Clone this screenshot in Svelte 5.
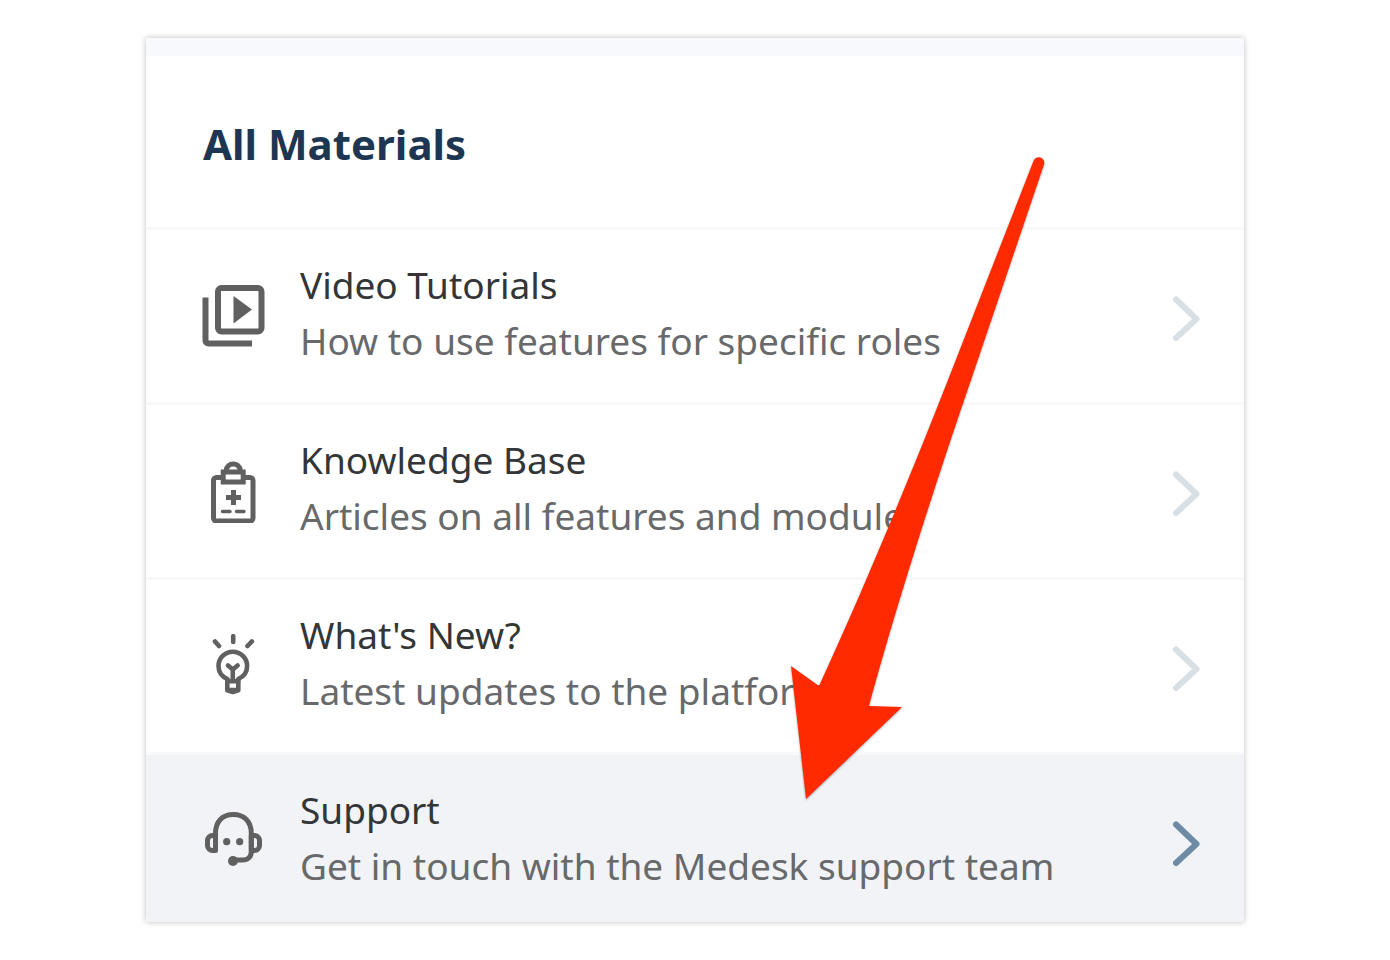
<script>
  const materials = [
    {
      id: "video",
      title: "Video Tutorials",
      description: "How to use features for specific roles",
    },
    {
      id: "knowledge",
      title: "Knowledge Base",
      description: "Articles on all features and modules",
    },
    {
      id: "news",
      title: "What's New?",
      description: "Latest updates to the platform",
    },
    {
      id: "support",
      title: "Support",
      description: "Get in touch with the Medesk support team",
    },
  ];

  let active = "support";
</script>

<main class="card">
  <header class="card-header">
    <h1>All Materials</h1>
  </header>

  <nav aria-label="All Materials">
    {#each materials as item (item.id)}
      <a
        class="row"
        class:active={active === item.id}
        href={`#${item.id}`}
        on:click={() => (active = item.id)}
      >
        <svg class="icon" viewBox="0 0 64 64" aria-hidden="true">
          {#if item.id === "video"}
            <rect x="17" y="4" width="43.5" height="43.5" rx="3.5" stroke-width="6" />
            <path d="M4.5 13.5V56.5a3 3 0 0 0 3 3H51" stroke-width="6" />
            <path class="solid" d="M32.5 12 51 25.5 32.5 39.5Z" />
          {:else if item.id === "knowledge"}
            <path d="M22 18.5H15.5a3 3 0 0 0-3 3V59a3 3 0 0 0 3 3H49a3 3 0 0 0 3-3V21.5a3 3 0 0 0-3-3H42" stroke-width="5" />
            <rect x="22.2" y="13" width="20" height="10" stroke-width="5" />
            <path d="M25 12C26 2.500 38.5 2.500 39.5 12" stroke-width="5" />
            <path d="M32.5 31v15M25 38.5h15" stroke-width="5" />
            <path d="M21.5 52.5h7.5M35.5 52.5h7.5" stroke-width="3.5" stroke-linecap="round" />
          {:else if item.id === "news"}
            <g stroke-width="4.6" stroke-linecap="round" stroke-linejoin="round">
              <path d="M32.2 2.2v5.8M14 7.5l4 4.5M50.8 7.5l-4.3 4.5" />
              <path d="M26.5 47.5V45C20.5 42.5 17.5 37.5 17.5 32a14.3 14.3 0 0 1 28.6 0C46.1 37.5 43 42.5 37.3 45v2.5" />
              <path d="M27 31.5l4.8 4 4.8-4M31.8 35.5V47" />
              <path d="M26.3 47.3h11v9l-5.5 1.7-5.5-1.7ZM26.3 56h11" />
            </g>
          {:else}
            <g stroke-width="5">
              <path d="M14.5 41V24.5C14.5 12 22 5.5 32.3 5.5S50.3 12 50.3 24.5V42.5C50.3 48 47 51 41.5 51H33" />
              <path d="M14.5 26.5H11.5a5 5 0 0 0-5 5V36.5a5 5 0 0 0 5 5H14.5Z" stroke-linejoin="round" />
              <path d="M50.3 26.5H53.5a5 5 0 0 1 5 5V36.5a5 5 0 0 1-5 5H50.3Z" stroke-linejoin="round" />
            </g>
            <circle class="solid" cx="32" cy="52" r="5" />
            <circle class="solid" cx="25.7" cy="32.7" r="3.6" />
            <circle class="solid" cx="38.7" cy="32.7" r="3.6" />
          {/if}
        </svg>

        <span class="text">
          <span class="title">{item.title}</span>
          <span class="description">{item.description}</span>
        </span>

        <svg class="chevron" viewBox="0 0 28 52" aria-hidden="true">
          <path d="M4 9.5 24.5 29 4 48" />
        </svg>
      </a>
    {/each}
  </nav>

  <!-- Pointer drawn over the list, aimed at the Support row -->
  <svg class="pointer" viewBox="0 0 260 650" aria-hidden="true">
    <path d="M243.5 11A5.5 5.5 0 0 1 254 14.5L181 230C142 343 103 467 79 556L112 557 16 649 1 516 29 536C75 436 122 322 158 230Z" />
  </svg>
</main>

<style>
  :global(body) {
    margin: 0;
    background: #fff;
  }

  .card {
    position: relative;
    margin: 38px 146px;
    background: #fff;
    box-shadow: 0 0 6px rgba(0, 0, 0, 0.25);
    font-family: "Noto Sans", sans-serif;
  }

  .card-header {
    padding: 63px 57px 58px;
    border-top: 18px solid #f8f9fc;
  }

  h1 {
    margin: 0;
    color: #1d3752;
    font-size: 42px;
    font-weight: 700;
    line-height: 50px;
  }

  .row {
    display: flex;
    align-items: center;
    gap: 35px;
    padding: 27px 44px 27px 55px;
    border-top: 3px solid #f8f9fa;
    text-decoration: none;
  }

  .row.active {
    padding-bottom: 22px;
    background: #f1f3f7;
  }

  .icon {
    flex: none;
    width: 64px;
    height: 64px;
    fill: none;
    stroke: #606060;
  }

  .solid {
    fill: #606060;
    stroke: none;
  }

  .text {
    display: flex;
    flex: 1;
    flex-direction: column;
    min-width: 0;
    padding-bottom: 6px;
    font-size: 37px;
    line-height: 56px;
  }

  .title {
    color: #333537;
  }

  .description {
    color: #67696b;
  }

  .chevron {
    flex: none;
    width: 28px;
    height: 52px;
    fill: none;
    stroke: #d8dfe5;
    stroke-width: 6;
    stroke-linecap: round;
    stroke-linejoin: round;
  }

  .active .chevron {
    stroke: #6e8ba6;
  }

  .pointer {
    position: absolute;
    top: 112px;
    left: 644px;
    width: 260px;
    height: 650px;
    fill: #ff2a00;
    filter: drop-shadow(0 1px 1px rgba(0, 0, 0, 0.35));
    pointer-events: none;
  }
</style>
